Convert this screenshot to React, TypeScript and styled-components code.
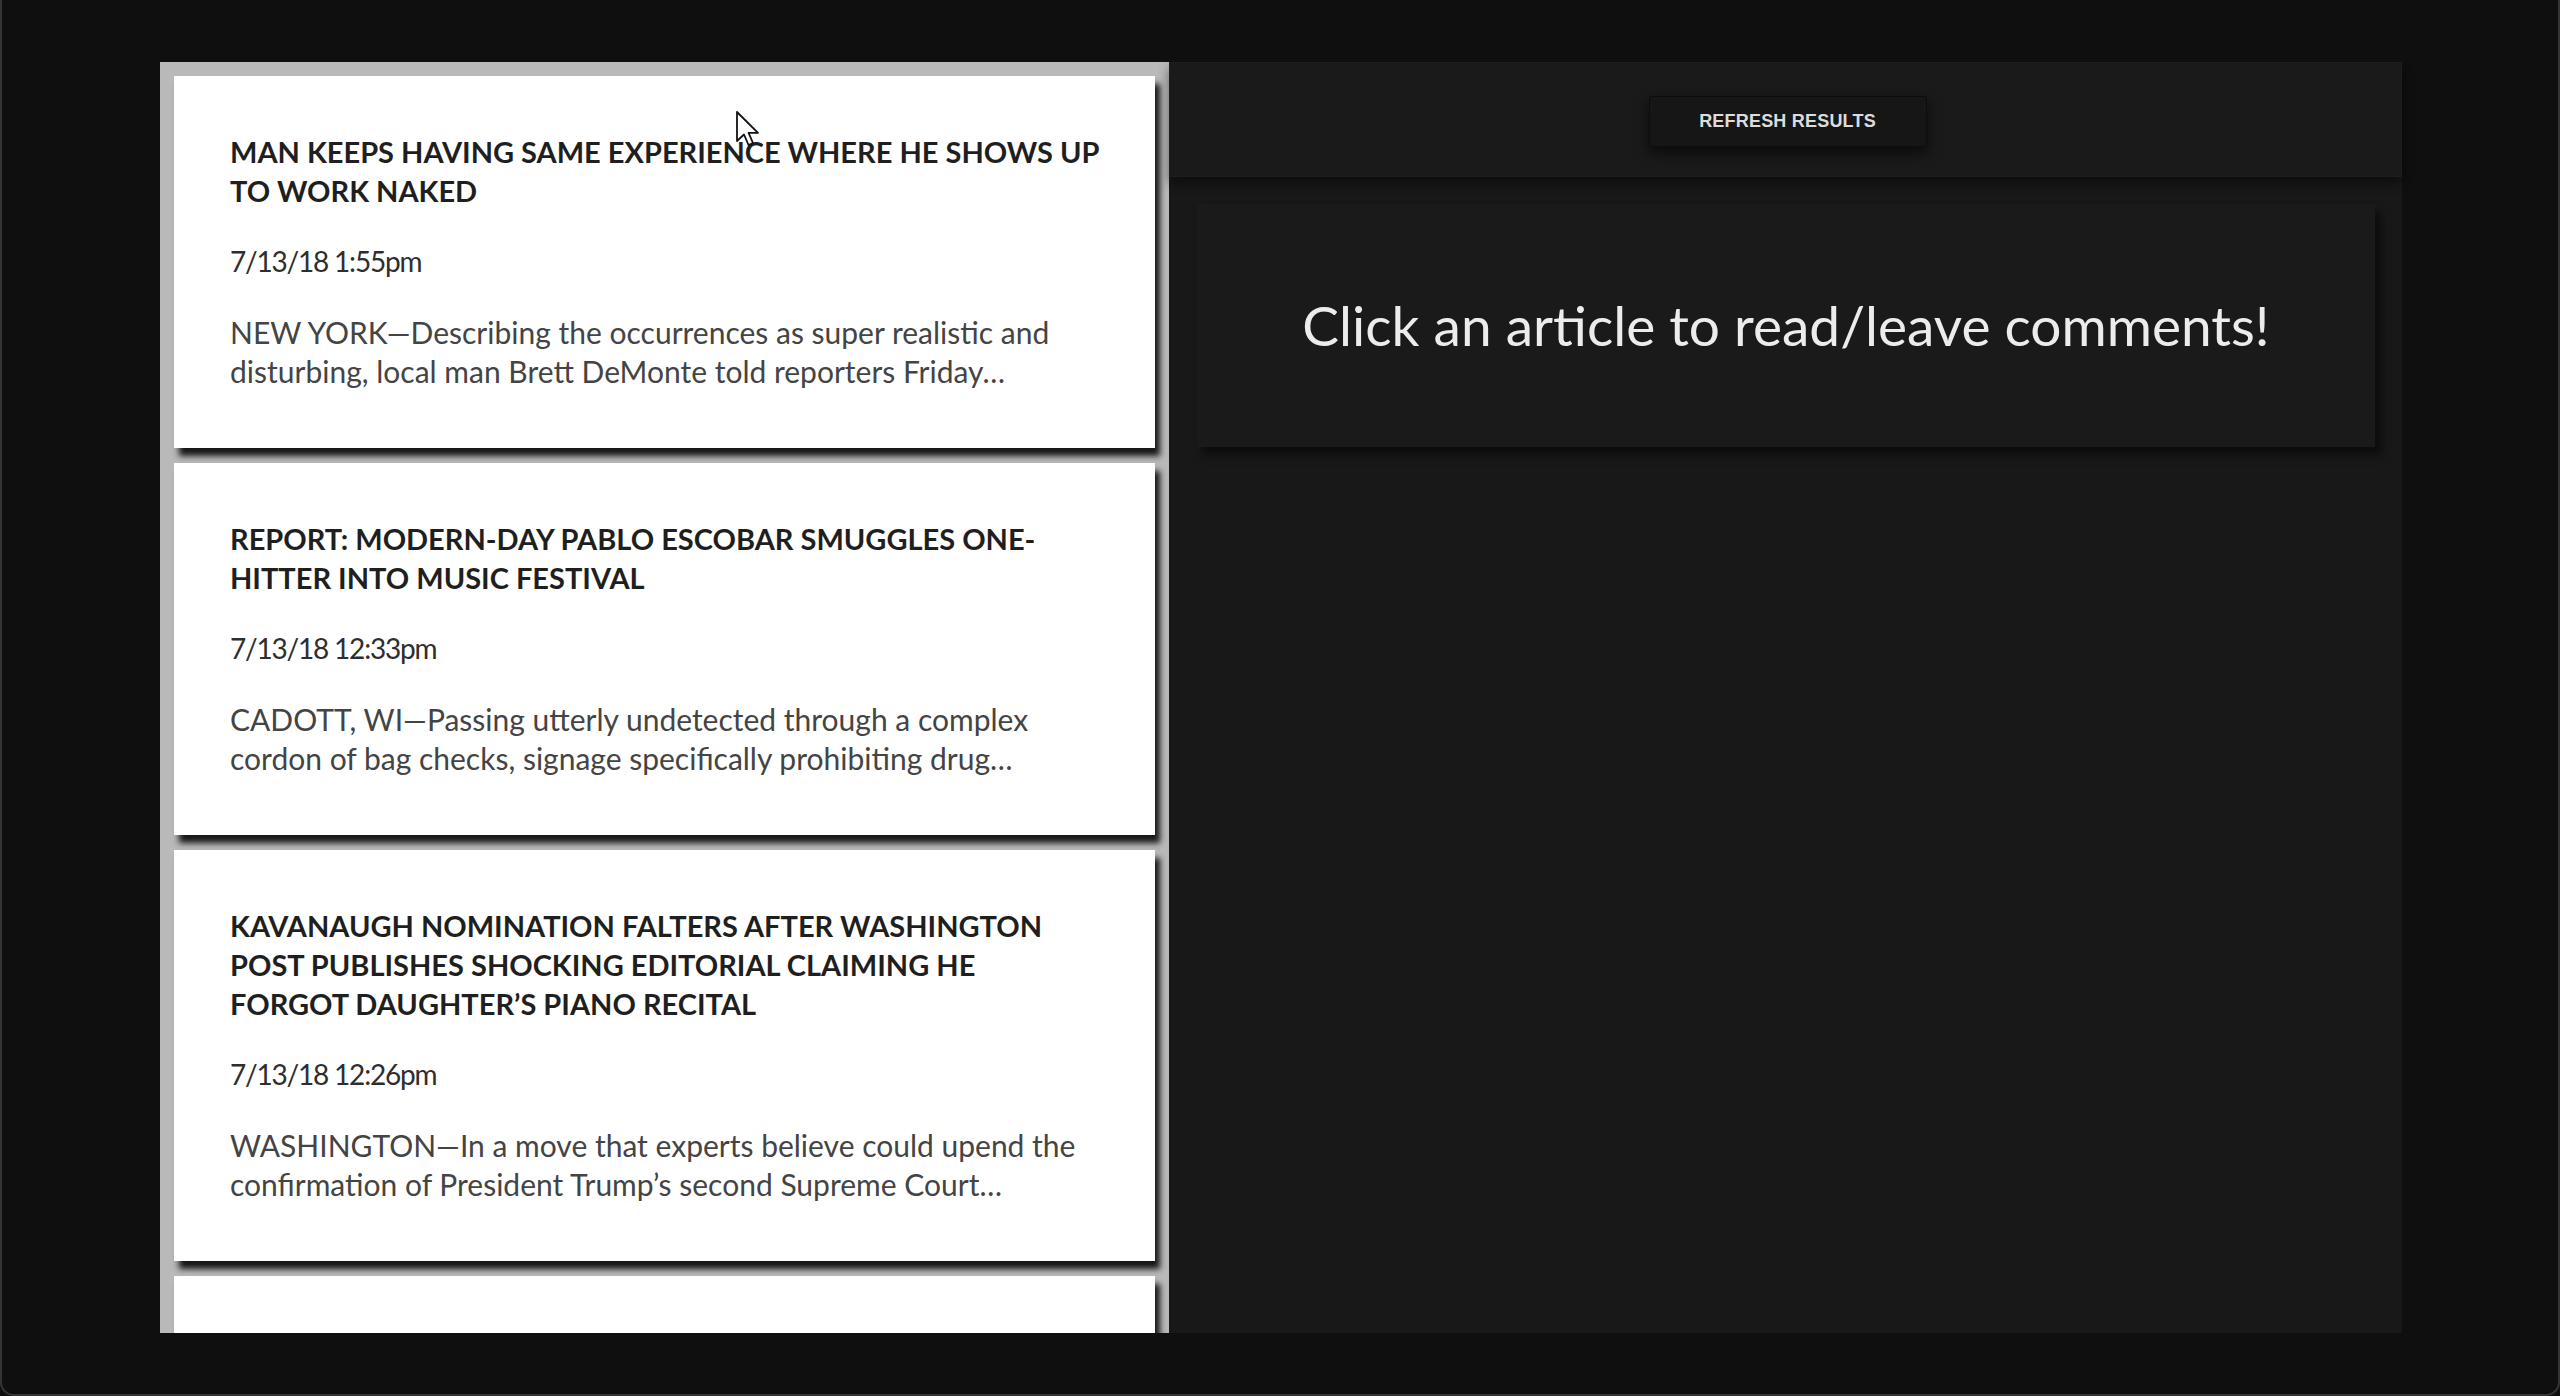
import React from "react";
import styled, { createGlobalStyle } from "styled-components";

const GlobalStyle = createGlobalStyle`
  html, body {
    margin: 0;
    padding: 0;
    background: #0f0f0f;
  }
  * { box-sizing: border-box; }
`;

const Frame = styled.div`
  position: relative;
  width: 2560px;
  height: 1396px;
  background: #0f0f0f;
  border: 2px solid #343434;
  border-top: none;
  border-radius: 0 0 14px 14px;
  padding: 62px 0 0 158px;
  overflow: hidden;
`;

const Main = styled.div`
  display: grid;
  grid-template-columns: 1009px 1233px;
  height: 1271px;
  overflow: hidden;
`;

const ArticleList = styled.div`
  background: #b9b9b9;
  padding: 14px 14px 0 14px;
  display: flex;
  flex-direction: column;
  gap: 15px;
  overflow: hidden;
`;

const Card = styled.article<{ $minH?: number }>`
  flex: none;
  background: #ffffff;
  padding: 56px 56px 57px 56px;
  box-shadow: 5px 8px 6px rgba(0, 0, 0, 0.88);
  font-family: Lato, "Open Sans", sans-serif;
  min-height: ${(p) => (p.$minH ? `${p.$minH}px` : "auto")};
`;

const Title = styled.h2`
  margin: 0 0 32px 0;
  font-size: 29px;
  line-height: 39px;
  font-weight: 700;
  color: #1f1f1f;
  white-space: nowrap;
  letter-spacing: 0;
`;

const DateLine = styled.div`
  margin: 0 0 32px 0;
  font-size: 28px;
  line-height: 39px;
  color: #2e2e2e;
  letter-spacing: -1.2px;
`;

const Summary = styled.p`
  margin: 0;
  font-size: 30px;
  line-height: 39px;
  color: #444;
  white-space: nowrap;
`;

const Side = styled.div`
  background: #181818;
  display: flex;
  flex-direction: column;
`;

const Header = styled.div`
  height: 115px;
  background: #1a1a1a;
  border: 1px solid #1e1e1e;
  box-shadow: 0 6px 10px rgba(0, 0, 0, 0.45);
  display: flex;
  align-items: center;
  justify-content: center;
  padding-left: 4px;
`;

const RefreshButton = styled.button`
  width: 278px;
  height: 51px;
  margin-top: 4px;
  background: #161616;
  border: 1px solid #0d0d0d;
  border-radius: 2px;
  box-shadow: 0 6px 14px rgba(0, 0, 0, 0.6);
  color: #dcdcdc;
  font-family: "Liberation Sans", Arial, sans-serif;
  font-weight: 700;
  font-size: 18px;
  letter-spacing: 0.2px;
  cursor: pointer;
`;

const Prompt = styled.div`
  margin: 27px 27px 0 28px;
  height: 243px;
  background: #1a1a1a;
  box-shadow: 6px 8px 8px rgba(0, 0, 0, 0.5);
  display: flex;
  align-items: center;
  justify-content: center;
  color: #ececec;
  font-family: Lato, "Open Sans", sans-serif;
  font-size: 55px;
  font-weight: 400;
  padding-bottom: 2px;
`;

const Pointer = styled.svg`
  position: absolute;
  left: 733px;
  top: 110px;
  width: 26px;
  height: 38px;
  pointer-events: none;
`;

type Article = { title: string[]; date: string; summary: string[] };

const articles: Article[] = [
  {
    title: ["MAN KEEPS HAVING SAME EXPERIENCE WHERE HE SHOWS UP", "TO WORK NAKED"],
    date: "7/13/18 1:55pm",
    summary: [
      "NEW YORK—Describing the occurrences as super realistic and",
      "disturbing, local man Brett DeMonte told reporters Friday…",
    ],
  },
  {
    title: ["REPORT: MODERN-DAY PABLO ESCOBAR SMUGGLES ONE-", "HITTER INTO MUSIC FESTIVAL"],
    date: "7/13/18 12:33pm",
    summary: [
      "CADOTT, WI—Passing utterly undetected through a complex",
      "cordon of bag checks, signage specifically prohibiting drug…",
    ],
  },
  {
    title: [
      "KAVANAUGH NOMINATION FALTERS AFTER WASHINGTON",
      "POST PUBLISHES SHOCKING EDITORIAL CLAIMING HE",
      "FORGOT DAUGHTER’S PIANO RECITAL",
    ],
    date: "7/13/18 12:26pm",
    summary: [
      "WASHINGTON—In a move that experts believe could upend the",
      "confirmation of President Trump’s second Supreme Court…",
    ],
  },
];

const Lines = ({ lines }: { lines: string[] }) => (
  <>
    {lines.map((l, i) => (
      <React.Fragment key={i}>
        {i > 0 && <br />}
        {l}
      </React.Fragment>
    ))}
  </>
);

export default function App() {
  return (
    <>
      <GlobalStyle />
      <Frame>
        <Main>
          <ArticleList>
            {articles.map((a, i) => (
              <Card key={i}>
                <Title>
                  <Lines lines={a.title} />
                </Title>
                <DateLine>{a.date}</DateLine>
                <Summary>
                  <Lines lines={a.summary} />
                </Summary>
              </Card>
            ))}
            <Card $minH={300} />
          </ArticleList>
          <Side>
            <Header>
              <RefreshButton>REFRESH RESULTS</RefreshButton>
            </Header>
            <Prompt>Click an article to read/leave comments!</Prompt>
          </Side>
        </Main>
        <Pointer viewBox="0 0 26 38">
          <path
            d="M2 2 L2 31 L9 24.5 L13.5 35 L18 33 L13.6 22.8 L23 22.8 Z"
            fill="#ffffff"
            stroke="#111"
            strokeWidth="1.8"
            strokeLinejoin="round"
          />
        </Pointer>
      </Frame>
    </>
  );
}
